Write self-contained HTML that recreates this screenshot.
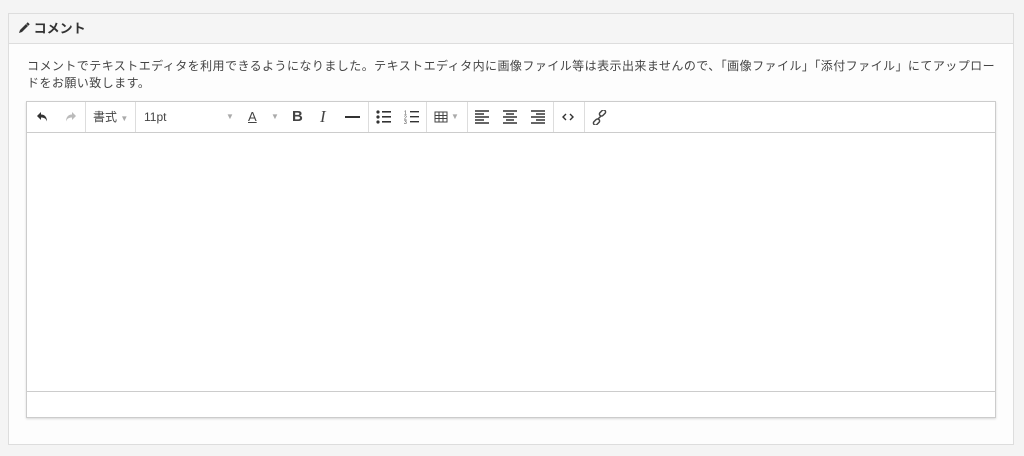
<!DOCTYPE html>
<html><head><meta charset="utf-8"><style>
body{margin:0;width:1024px;height:456px;background:#f4f4f4;font-family:"Liberation Sans","Noto Sans CJK JP",sans-serif;position:relative;overflow:hidden}
.panel{position:absolute;left:8px;top:13px;width:1004px;height:430px;border:1px solid #ddd;background:#fdfdfd}
.hd{height:29px;background:#f5f5f5;border-bottom:1px solid #ddd;font-size:13px;color:#333;line-height:29px;padding-left:9px;font-weight:bold}
.txt{position:absolute;left:18px;top:44px;width:972px;font-size:12px;color:#444;line-height:17px;letter-spacing:0.45px}
.ed{position:absolute;left:17px;top:87px;width:968px;height:315px;border:1px solid #ccc;background:#fff;box-shadow:0 1px 2px rgba(0,0,0,.15)}
.tb{height:30px;border-bottom:1px solid #ccc;position:relative}
.sep{position:absolute;top:0;width:1px;height:30px;background:#ddd}
.ic{position:absolute;top:0;height:30px;line-height:30px;font-size:12px;color:#444}
svg.i{position:absolute;top:8px}
.car{color:#aaa;font-size:8px}
.sb{position:absolute;left:0;right:0;bottom:0;height:25px;border-top:1px solid #ccc}
</style></head><body>
<div class="panel">
<div class="hd"><svg width="12" height="12" viewBox="0 0 12 12" style="vertical-align:-1px"><path d="M1 11l1-3 6-6 2 2-6 6z" fill="#333"/><path d="M9 1l2 2" stroke="#333" stroke-width="2"/></svg> コメント</div>
<div class="txt">コメントでテキストエディタを利用できるようになりました。テキストエディタ内に画像ファイル等は表示出来ませんので、「画像ファイル」「添付ファイル」にてアップロードをお願い致します。</div>
<div class="ed">
<div class="tb">
<svg class="i" style="left:9px" width="14" height="14" viewBox="0 0 14 14"><path d="M5 2L1 6l4 4V7.5c3 0 5 1 6 4 0-4-2-7-6-7V2z" fill="#333"/></svg>
<svg class="i" style="left:36px" width="14" height="14" viewBox="0 0 14 14"><path d="M9 2l4 4-4 4V7.5c-3 0-5 1-6 4 0-4 2-7 6-7V2z" fill="#bbb"/></svg>
<div class="sep" style="left:58px"></div>
<span class="ic" style="left:66px">書式 <span class="car">▼</span></span>
<div class="sep" style="left:108px"></div>
<span class="ic" style="left:117px">11pt</span>
<span class="ic car" style="left:199px">▼</span>
<span class="ic" style="left:221px;text-decoration:underline;font-size:13px">A</span>
<span class="ic car" style="left:244px">▼</span>
<span class="ic" style="left:265px;font-weight:bold;font-size:15px">B</span>
<span class="ic" style="left:293px;font-style:italic;font-family:'Liberation Serif';font-size:17px">I</span>
<svg class="i" style="left:318px" width="16" height="14"><rect x="0" y="6" width="15" height="2" fill="#333"/></svg>
<div class="sep" style="left:341px"></div>
<svg class="i" style="left:349px" width="16" height="14"><circle cx="2" cy="2" r="1.6" fill="#333"/><circle cx="2" cy="7" r="1.6" fill="#333"/><circle cx="2" cy="12" r="1.6" fill="#333"/><rect x="6" y="1" width="9" height="1.6" fill="#333"/><rect x="6" y="6" width="9" height="1.6" fill="#333"/><rect x="6" y="11" width="9" height="1.6" fill="#333"/></svg>
<svg class="i" style="left:377px" width="16" height="14"><text x="0" y="4.5" font-size="5" fill="#333">1</text><text x="0" y="9.5" font-size="5" fill="#333">2</text><text x="0" y="14" font-size="5" fill="#333">3</text><rect x="6" y="1" width="9" height="1.4" fill="#333"/><rect x="6" y="6" width="9" height="1.4" fill="#333"/><rect x="6" y="11" width="9" height="1.4" fill="#333"/></svg>
<div class="sep" style="left:399px"></div>
<svg class="i" style="left:407px" width="14" height="14"><path d="M1 2h12v10H1zM1 5.5h12M1 8.5h12M5 2v10M9 2v10" fill="none" stroke="#444" stroke-width="1"/></svg>
<span class="ic car" style="left:424px">▼</span>
<div class="sep" style="left:440px"></div>
<svg class="i" style="left:448px" width="15" height="14"><path d="M0 1h14M0 4h9M0 7h14M0 10h9M0 13h14" stroke="#333" stroke-width="1.4"/></svg>
<svg class="i" style="left:476px" width="15" height="14"><path d="M0 1h14M3 4h8M0 7h14M3 10h8M0 13h14" stroke="#333" stroke-width="1.4"/></svg>
<svg class="i" style="left:504px" width="15" height="14"><path d="M0 1h14M5 4h9M0 7h14M5 10h9M0 13h14" stroke="#333" stroke-width="1.4"/></svg>
<div class="sep" style="left:526px"></div>
<svg class="i" style="left:534px" width="14" height="14"><path d="M5 4L2 7l3 3M9 4l3 3-3 3" fill="none" stroke="#333" stroke-width="1.4"/></svg>
<div class="sep" style="left:557px"></div>
<svg class="i" style="left:565px" width="15" height="15" viewBox="0 0 15 15"><g fill="none" stroke="#444" stroke-width="1.5"><rect x="7" y="1" width="7" height="4" rx="2" transform="rotate(-45 10.5 3)"/><rect x="1" y="10" width="7" height="4" rx="2" transform="rotate(-45 4.5 12)"/><path d="M5.5 9.5l4-4"/></g></svg>
</div>
<div class="sb"></div>
</div>
</div>
</body></html>
